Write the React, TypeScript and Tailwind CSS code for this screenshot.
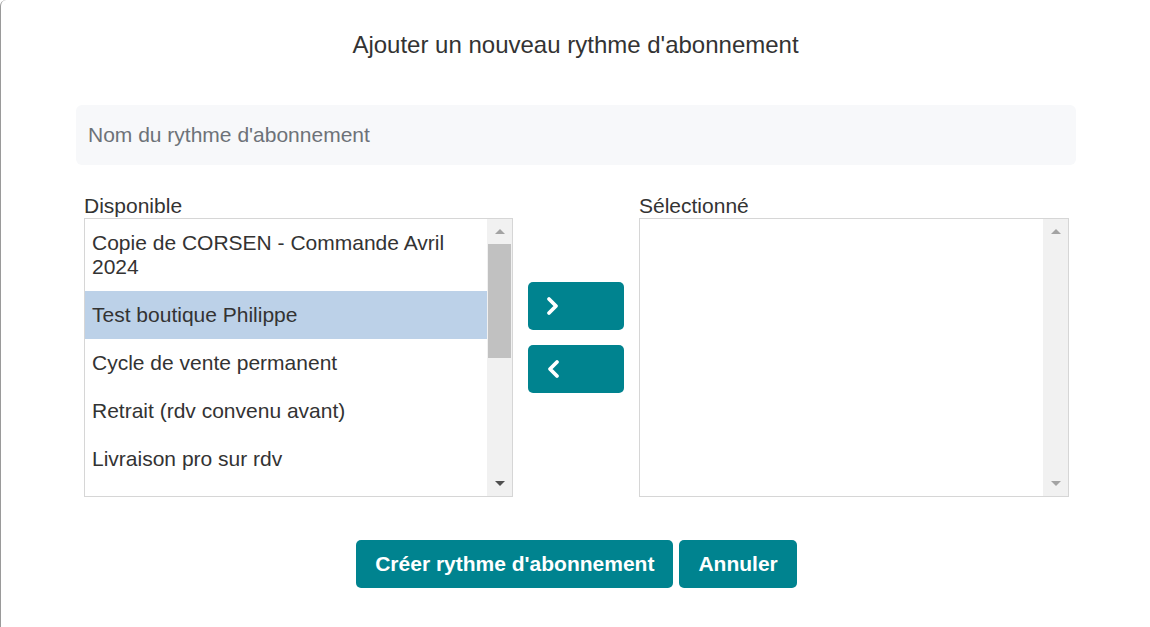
// ─── Data ─────────────────────────────────────────────────────

const AVAILABLE = [
  "Copie de CORSEN - Commande Avril 2024",
  "Test boutique Philippe",
  "Cycle de vente permanent",
  "Retrait (rdv convenu avant)",
  "Livraison pro sur rdv",
];

const SELECTED_INDEX = 1;

// ─── Icons ────────────────────────────────────────────────────

function Chevron({ dir }: { dir: "left" | "right" }) {
  return (
    <svg width="16" height="20" viewBox="0 0 16 20" fill="none">
      <polyline
        points={dir === "right" ? "4,3 11,10 4,17" : "12,3 5,10 12,17"}
        stroke="white"
        strokeWidth="3.8"
        strokeLinecap="round"
        strokeLinejoin="round"
      />
    </svg>
  );
}

// ─── Fake scrollbar ───────────────────────────────────────────

function Scrollbar({ thumb, downActive }: { thumb: boolean; downActive: boolean }) {
  return (
    <div className="w-[25px] shrink-0 bg-[#f1f1f1] flex flex-col items-center">
      <div className="h-[25px] w-full flex items-center justify-center">
        <div className="w-0 h-0 border-l-[5px] border-r-[5px] border-b-[5px] border-l-transparent border-r-transparent border-b-[#a3a3a3]" />
      </div>
      <div className="flex-1 w-full px-[1px]">
        {thumb && <div className="h-[114px] w-full bg-[#c1c1c1]" />}
      </div>
      <div className="h-[25px] w-full flex items-center justify-center">
        <div
          className={
            downActive
              ? "w-0 h-0 border-l-[5px] border-r-[5px] border-t-[5px] border-l-transparent border-r-transparent border-t-[#505050]"
              : "w-0 h-0 border-l-[5px] border-r-[5px] border-t-[5px] border-l-transparent border-r-transparent border-t-[#a3a3a3]"
          }
        />
      </div>
    </div>
  );
}

// ─── Main ─────────────────────────────────────────────────────

export default function App() {
  return (
    <div
      className="w-[1150px] h-[627px] bg-white border-l border-[#9a9a9a] rounded-tl-[6px] text-[#333] overflow-hidden"
      style={{ fontFamily: '"Liberation Sans", Arial, sans-serif' }}
    >
      {/* ── Title ── */}
      <h2 className="text-[24px] leading-[30px] text-center pt-[30px]">
        Ajouter un nouveau rythme d'abonnement
      </h2>

      {/* ── Name input ── */}
      <div className="ml-[75px] mt-[45px] w-[1000px] h-[60px] bg-[#f7f8fa] rounded-[6px] flex items-center px-3">
        <span className="text-[21px] text-[#6d7278]">Nom du rythme d'abonnement</span>
      </div>

      {/* ── Dual list ── */}
      <div className="flex ml-[83px] mt-[29px]">
        {/* Available */}
        <div className="w-[429px] shrink-0">
          <div className="text-[21px] leading-[24px]">Disponible</div>
          <div className="h-[279px] border border-[#d6d6d6] flex">
            <div className="flex-1 min-w-0 overflow-hidden">
              {AVAILABLE.map((item, i) => (
                <div
                  key={item}
                  className={
                    i === SELECTED_INDEX
                      ? "pl-[7px] pr-2 py-3 text-[21px] leading-[24px] bg-[#bcd1e8]"
                      : "pl-[7px] pr-2 py-3 text-[21px] leading-[24px]"
                  }
                >
                  {item}
                </div>
              ))}
            </div>
            <Scrollbar thumb downActive />
          </div>
        </div>

        {/* Move buttons */}
        <div className="w-[96px] shrink-0 mx-[15px] pt-[88px] flex flex-col gap-[15px]">
          <button className="h-[48px] rounded-[5px] bg-[#00838f] flex items-center pl-[17px]">
            <Chevron dir="right" />
          </button>
          <button className="h-[48px] rounded-[5px] bg-[#00838f] flex items-center pl-[17px]">
            <Chevron dir="left" />
          </button>
        </div>

        {/* Selected */}
        <div className="w-[430px] shrink-0">
          <div className="text-[21px] leading-[24px]">Sélectionné</div>
          <div className="h-[279px] border border-[#d6d6d6] flex">
            <div className="flex-1" />
            <Scrollbar thumb={false} downActive={false} />
          </div>
        </div>
      </div>

      {/* ── Footer buttons ── */}
      <div className="flex justify-center gap-[6px] mt-[43px] pl-[2px]">
        <button className="h-[48px] px-[19px] rounded-[5px] bg-[#00838f] text-white font-bold text-[21px]">
          Créer rythme d'abonnement
        </button>
        <button className="h-[48px] px-[19px] rounded-[5px] bg-[#00838f] text-white font-bold text-[21px]">
          Annuler
        </button>
      </div>
    </div>
  );
}
